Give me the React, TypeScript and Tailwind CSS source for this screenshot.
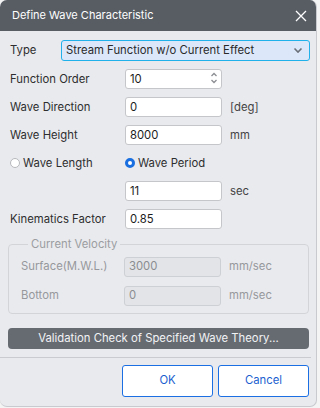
import { useState } from "react";

const font = { fontFamily: "Inter, 'Noto Sans', sans-serif" };

function TextBox({ value, disabled = false, spinner = false }: { value: string; disabled?: boolean; spinner?: boolean }) {
  return (
    <div
      className={
        "relative flex h-[20px] w-[97px] items-center rounded-[3px] border px-[4px] " +
        (disabled ? "border-[#cdd0d4] bg-[#e2e4e8] text-[#8a8c90]" : "border-[#c4c6ca] bg-white text-[#1b1b1b]")
      }
    >
      <span>{value}</span>
      {spinner && (
        <div className="absolute right-[3px] top-[1px] flex flex-col items-center text-[#8a8d92]">
          <svg width="8" height="7" viewBox="0 0 8 7">
            <path d="M1.5 5 L4 2.5 L6.5 5" fill="none" stroke="currentColor" strokeWidth="1.3" />
          </svg>
          <svg width="8" height="7" viewBox="0 0 8 7">
            <path d="M1.5 2 L4 4.5 L6.5 2" fill="none" stroke="currentColor" strokeWidth="1.3" />
          </svg>
        </div>
      )}
    </div>
  );
}

function Row({ label, children, unit }: { label: string; children: React.ReactNode; unit?: string }) {
  return (
    <div className="ml-[2px] flex h-[20px] items-center">
      <span className="w-[115px] text-[#2e2e2e]">{label}</span>
      {children}
      {unit && <span className="ml-[8px] text-[#444]">{unit}</span>}
    </div>
  );
}

function Radio({ checked }: { checked: boolean }) {
  return checked ? (
    <span className="box-border inline-block h-[10px] w-[10px] rounded-full border-[3px] border-[#1a6fe0] bg-white" />
  ) : (
    <span className="box-border inline-block h-[10px] w-[10px] rounded-full border border-[#b6b8bc] bg-white" />
  );
}

export default function App() {
  const [period, setPeriod] = useState(true);

  return (
    <div className="relative h-[408px] w-[320px] overflow-hidden bg-[#f4f4f4] text-[11.3px]" style={font}>
      <div className="flex h-[407px] w-[317px] flex-col overflow-hidden rounded-[7px] border-r border-b border-[#c8cacf] bg-[#e9eaee]">
        <div className="flex h-[31px] items-center justify-between bg-[#585d64] pl-[12px] pr-[9px] text-white">
          <span className="text-[11px]">Define Wave Characteristic</span>
          <svg width="12" height="12" viewBox="0 0 12 12">
            <path d="M1 1 L11 11 M11 1 L1 11" stroke="white" strokeWidth="1.3" />
          </svg>
        </div>

        <div className="flex flex-col pl-[8px] pr-[6px] pt-[9px]">
          <div className="ml-[2px] flex h-[21px] items-center">
            <span className="w-[51px] text-[#2e2e2e]">Type</span>
            <div className="flex h-[21px] flex-1 items-center justify-between rounded-[3px] border border-[#20b0ea] bg-[#dce8fa] pl-[4px] pr-[6px] text-[#2a2a2a]">
              <span>Stream Function w/o Current Effect</span>
              <svg width="10" height="7" viewBox="0 0 10 7" className="text-[#6b7078]">
                <path d="M1.5 1.5 L5 5 L8.5 1.5" fill="none" stroke="currentColor" strokeWidth="1.6" />
              </svg>
            </div>
          </div>

          <div className="mt-[8px] flex flex-col gap-[8px]">
            <Row label="Function Order">
              <TextBox value="10" spinner />
            </Row>
            <Row label="Wave Direction" unit="[deg]">
              <TextBox value="0" />
            </Row>
            <Row label="Wave Height" unit="mm">
              <TextBox value="8000" />
            </Row>
            <div className="ml-[2px] flex h-[20px] items-center text-[#2e2e2e]">
              <button className="flex w-[115px] items-center gap-[3px]" onClick={() => setPeriod(false)}>
                <Radio checked={!period} />
                <span>Wave Length</span>
              </button>
              <button className="flex items-center gap-[3px]" onClick={() => setPeriod(true)}>
                <Radio checked={period} />
                <span>Wave Period</span>
              </button>
            </div>
            <Row label="" unit="sec">
              <TextBox value="11" />
            </Row>
            <Row label="Kinematics Factor">
              <TextBox value="0.85" />
            </Row>
          </div>

          <fieldset className="mt-[7px] mr-[1px] rounded-[4px] border border-[#d2d4d8] pb-[7px] pl-[12px]">
            <legend className="ml-[7px] px-[3px] text-[#9b9da1]">Current Velocity</legend>
            <div className="mt-[4px] flex flex-col gap-[9px] text-[#96989c]">
              <div className="flex h-[20px] items-center">
                <span className="w-[103px]">Surface(M.W.L.)</span>
                <TextBox value="3000" disabled />
                <span className="ml-[8px]">mm/sec</span>
              </div>
              <div className="flex h-[20px] items-center">
                <span className="w-[103px]">Bottom</span>
                <TextBox value="0" disabled />
                <span className="ml-[8px]">mm/sec</span>
              </div>
            </div>
          </fieldset>

          <button className="mt-[14px] mr-[1px] h-[21px] rounded-[4px] bg-[#666b72] text-[#f2f3f5]">
            Validation Check of Specified Wave Theory...
          </button>
        </div>

        <div className="mt-[8px] mr-[5px] h-px bg-[#c9cbd0]" />

        <div className="flex justify-end gap-[5px] pr-[7px] pt-[7px]">
          <button className="h-[32px] w-[91px] rounded-[3px] border border-[#1c6fe3] bg-white text-[#1c5fd0]">OK</button>
          <button className="h-[32px] w-[91px] rounded-[3px] border border-[#1c6fe3] bg-white text-[#1c5fd0]">Cancel</button>
        </div>
      </div>
    </div>
  );
}
